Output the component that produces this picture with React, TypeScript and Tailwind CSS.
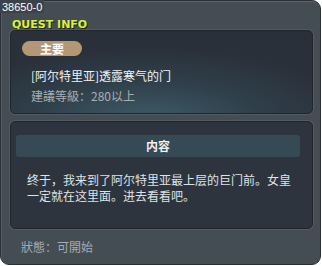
export default function App() {
  const cjk = { fontFamily: '"Noto Sans CJK SC", "Noto Sans", sans-serif' };

  return (
    <div className="relative w-[322px] h-[266px] bg-white overflow-hidden">
      <div className="flex flex-col w-[321px] h-[265px] rounded-[9px] border border-[#2a3035] bg-[#444c54] shadow-[inset_0_1px_0_#5b646c,inset_1px_0_0_#535b63]">
        <div className="h-[29px] pl-[11px] pt-[9px]">
          <span
            className="text-[11px] font-bold leading-none text-[#dcf03c] [text-shadow:1px_1px_0_#1d2416]"
            style={{ fontFamily: '"DejaVu Sans", "Liberation Sans", sans-serif' }}
          >
            QUEST INFO
          </span>
        </div>

        <div className="ml-[9px] mr-[7px] h-[84px] rounded-[5px] border border-[#20262c] bg-[radial-gradient(ellipse_70%_90%_at_45%_110%,#3e5c68_0%,#2f3f4a_55%,#2a303a_100%)] shadow-[0_0_0_1px_#525b63] px-[11px] pt-[10px]" style={cjk}>
          <div className="flex items-center justify-center w-[60px] h-[15px] rounded-full bg-[#b49876] text-[12px] font-bold leading-none text-white">
            主要
          </div>
          <div className="mt-[12px] pl-[9px] text-[12px] leading-[16px] text-[#f2f2f2]">[阿尔特里亚]透露寒气的门</div>
          <div className="mt-[4px] pl-[9px] text-[12px] leading-[16px] text-[#a8afb4]">建議等級：280以上</div>
        </div>

        <div className="ml-[9px] mr-[7px] mt-[7px] h-[108px] rounded-[5px] border border-[#20262c] bg-[#2e343d] shadow-[0_0_0_1px_#525b63] pl-[5px] pr-[12px] pt-[13px]" style={cjk}>
          <div className="flex items-center justify-center h-[22px] rounded-[3px] bg-[#354a55] text-[12px] font-bold text-[#f0f0f0]">
            内容
          </div>
          <p className="mt-[15px] pl-[11px] pr-[2px] text-[12px] leading-[16px] text-[#dfe3e6]">
            终于，我来到了阿尔特里亚最上层的巨门前。女皇一定就在这里面。进去看看吧。
          </p>
        </div>

        <div className="mt-[10px] pl-[20px] text-[12px] leading-[16px] text-[#a6adb2]" style={cjk}>
          狀態：可開始
        </div>
      </div>

      <div
        className="absolute left-0 top-0 pl-[2px] pr-[2px] pt-[1px] text-[11px] leading-[12px] text-white rounded-br-[3px] bg-[#3b4249]"
        style={{ fontFamily: '"Liberation Sans", Arial, sans-serif' }}
      >
        38650-0
      </div>
    </div>
  );
}
